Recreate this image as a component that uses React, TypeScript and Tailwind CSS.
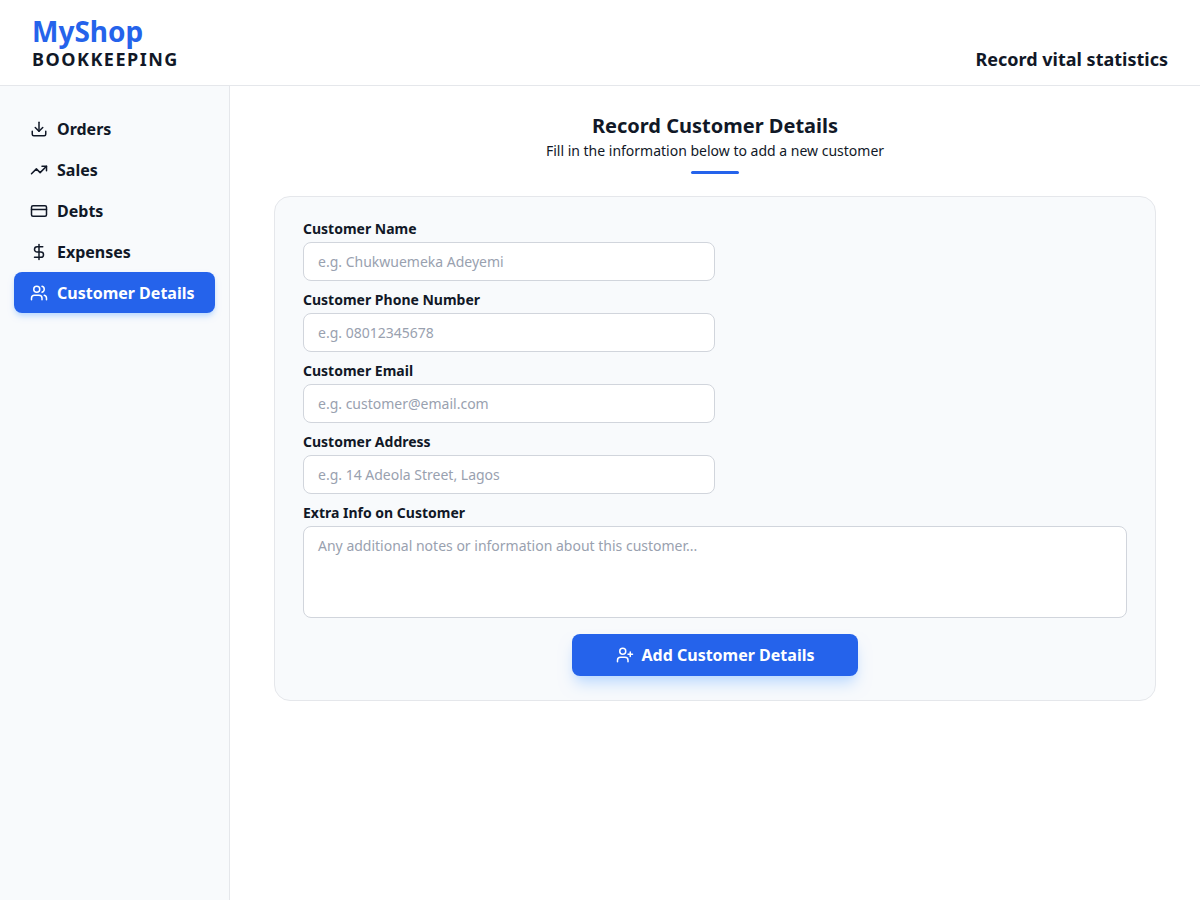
import { Download, TrendingUp, CreditCard, DollarSign, Users, UserPlus } from "lucide-react"

export default function App() {
  const nav = [
    { label: "Orders", icon: <Download className="h-[18px] w-[18px]" /> },
    { label: "Sales", icon: <TrendingUp className="h-[18px] w-[18px]" /> },
    { label: "Debts", icon: <CreditCard className="h-[18px] w-[18px]" /> },
    { label: "Expenses", icon: <DollarSign className="h-[18px] w-[18px]" /> },
    { label: "Customer Details", icon: <Users className="h-[18px] w-[18px]" />, active: true },
  ]
  const fields = [
    { label: "Customer Name", ph: "e.g. Chukwuemeka Adeyemi" },
    { label: "Customer Phone Number", ph: "e.g. 08012345678" },
    { label: "Customer Email", ph: "e.g. customer@email.com" },
    { label: "Customer Address", ph: "e.g. 14 Adeola Street, Lagos" },
  ]

  return (
    <div className="min-h-[900px] flex flex-col bg-white text-[#111827] [font-family:'DejaVu_Sans',sans-serif]">
      <header className="h-[86px] border-b border-gray-200 flex items-end justify-between px-8 pb-[14px]">
        <div>
          <div className="text-[28px] leading-[32px] font-bold text-[#2563eb]">MyShop</div>
          <div className="text-[18px] leading-[24px] font-bold tracking-[1.5px]">BOOKKEEPING</div>
        </div>
        <div className="text-[18px] leading-[24px] font-bold">Record vital statistics</div>
      </header>
      <div className="flex flex-1">
        <aside className="w-[230px] bg-[#f8fafc] border-r border-gray-200 px-[14px] pt-[22px] min-h-[814px]">
          {nav.map((n) => (
            <div
              key={n.label}
              className={`h-[41px] flex items-center gap-[9px] px-4 rounded-lg text-[16px] font-bold ${n.active ? "bg-[#2563eb] text-white shadow-md shadow-blue-200" : ""}`}
            >
              {n.icon}
              {n.label}
            </div>
          ))}
        </aside>
        <main className="flex-1 px-[44px] pt-[26px]">
          <div className="text-center">
            <h1 className="text-[20px] leading-[28px] font-bold">Record Customer Details</h1>
            <p className="text-[14px] leading-[20px] mt-[1px]">Fill in the information below to add a new customer</p>
            <div className="mx-auto mt-[10px] w-12 h-[3px] bg-[#2563eb] rounded" />
          </div>
          <div className="mt-[22px] bg-[#f8fafc] border border-gray-200 rounded-2xl px-[28px] pt-[22px] pb-[24px]">
            {fields.map((f) => (
              <div key={f.label} className="mb-[9px]">
                <label className="block text-[14px] leading-[20px] font-bold mb-[3px]">{f.label}</label>
                <input
                  placeholder={f.ph}
                  className="w-[412px] h-[39px] bg-white border border-gray-300 rounded-lg px-[14px] text-[14px] placeholder:text-gray-400 outline-none"
                />
              </div>
            ))}
            <label className="block text-[14px] leading-[20px] font-bold mb-[3px]">Extra Info on Customer</label>
            <textarea
              placeholder="Any additional notes or information about this customer..."
              className="block w-full h-[92px] bg-white border border-gray-300 rounded-lg px-[14px] py-[8px] text-[14px] placeholder:text-gray-400 outline-none resize-none"
            />
            <div className="flex justify-center mt-4">
              <button className="w-[286px] h-[42px] bg-[#2563eb] text-white rounded-lg flex items-center justify-center gap-2 text-[16px] font-bold shadow-lg shadow-blue-200">
                <UserPlus className="h-[18px] w-[18px]" />
                Add Customer Details
              </button>
            </div>
          </div>
        </main>
      </div>
    </div>
  )
}
